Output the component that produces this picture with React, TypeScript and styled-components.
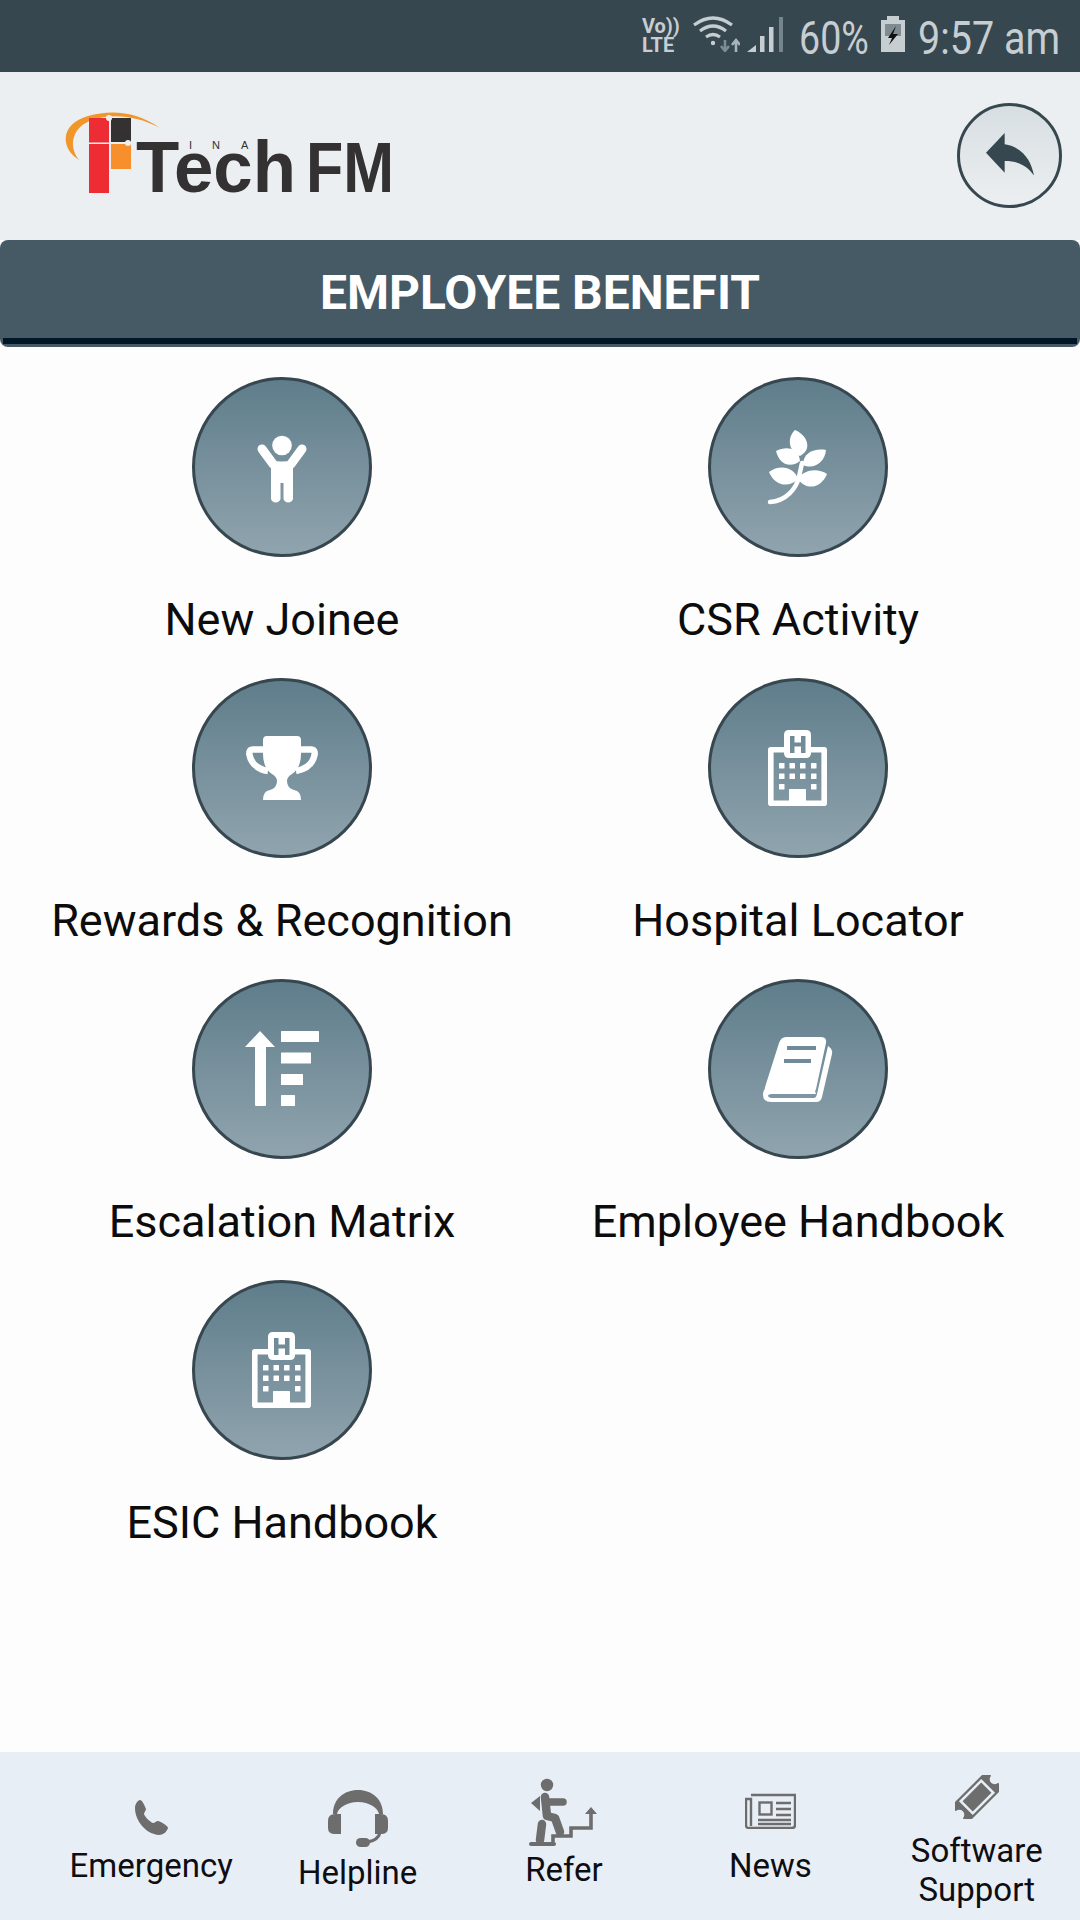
import React from "react";
import styled, { createGlobalStyle } from "styled-components";

const Global = createGlobalStyle`
  html, body { margin: 0; padding: 0; background: #fdfdfd; }
  * { box-sizing: border-box; }
`;

const Screen = styled.div`
  width: 1080px;
  height: 1920px;
  display: flex;
  flex-direction: column;
  background: #fdfdfd;
  font-family: Roboto, "Liberation Sans", sans-serif;
  overflow: hidden;
`;

const StatusBar = styled.div`
  height: 72px;
  flex: none;
  background: #37474f;
  display: flex;
  align-items: flex-start;
  justify-content: flex-end;
  padding: 16px 22px 0 0;
  color: #c7ced2;
`;

const StatusSlot = styled.div<{ $w: number; $gap: number }>`
  width: ${(p) => p.$w}px;
  margin-left: ${(p) => p.$gap}px;
  flex: none;
  height: 40px;
`;

const StatusText = styled.span<{ $scale: number }>`
  display: inline-block;
  margin-top: 2px;
  font-size: 47px;
  line-height: 40px;
  white-space: nowrap;
  transform-origin: left center;
  transform: scaleX(${(p) => p.$scale});
`;

const Network = styled.div`
  font-size: 21px;
  line-height: 19px;
  font-weight: 700;
  white-space: nowrap;
  transform-origin: left top;
  transform: scaleX(0.95);
  padding-top: 1px;
`;

const Header = styled.header`
  height: 168px;
  flex: none;
  background: #eceff1;
  display: flex;
  align-items: center;
  justify-content: space-between;
  padding: 0 18px 0 60px;
`;

const BackButton = styled.button`
  width: 105px;
  height: 105px;
  padding: 0;
  border-radius: 50%;
  border: 3px solid #37474f;
  background: linear-gradient(180deg, #d7dee2, #eceff1);
  display: flex;
  align-items: center;
  justify-content: center;
  margin-bottom: 2px;
`;

const TitleBar = styled.div`
  flex: none;
  height: 107px;
  padding: 0 3px 3px;
  background: #465a65;
  border-radius: 8px;
`;

const Title = styled.h1`
  margin: 0;
  height: 104px;
  padding-top: 6px;
  border-bottom: 6px solid #021629;
  display: flex;
  align-items: center;
  justify-content: center;
  color: #fff;
  font-size: 48px;
  font-weight: 700;
`;

const Grid = styled.main`
  flex: 1;
  display: grid;
  grid-template-columns: 516px 516px;
  grid-auto-rows: 301px;
  padding: 30px 24px 0;
`;

const Tile = styled.div`
  display: flex;
  flex-direction: column;
  align-items: center;
`;

const Disc = styled.div`
  width: 180px;
  height: 180px;
  border-radius: 50%;
  border: 3px solid #37474f;
  background: linear-gradient(180deg, #5f7d8b, #90a4ae);
  display: flex;
  align-items: center;
  justify-content: center;
`;

const TileLabel = styled.div`
  margin-top: 38px;
  font-size: 45px;
  line-height: 50px;
  color: #0c0c0c;
  white-space: nowrap;
`;

const BottomNav = styled.nav`
  flex: none;
  height: 168px;
  background: #e8eef6;
  padding-left: 48px;
  display: grid;
  grid-template-columns: repeat(5, 206.4px);
`;

const NavItem = styled.div<{ $top: number; $gap: number }>`
  display: flex;
  flex-direction: column;
  align-items: center;
  padding-top: ${(p) => p.$top}px;
  gap: ${(p) => p.$gap}px;
`;

const NavLabel = styled.div`
  font-size: 33px;
  line-height: 39px;
  color: #0e0e12;
  text-align: center;
  white-space: nowrap;
`;

const Icon120 = ({ children }: { children: React.ReactNode }) => (
  <svg width="120" height="120" viewBox="0 0 120 120" fill="#fff">{children}</svg>
);

const PersonIcon = () => (
  <Icon120>
    <circle cx="60" cy="38.5" r="9.8" />
    <path d="M40 42 L51 57 M80 42 L69 57" stroke="#fff" strokeWidth="9" strokeLinecap="round" fill="none" />
    <path d="M49 53 Q60 56 71 53 V92 a5 5 0 0 1 -9.5 0 V76 h-3 V92 a5 5 0 0 1 -9.5 0 Z" />
  </Icon120>
);

const LeafIcon = () => (
  <Icon120>
    <path d="M32 95 C48 94 58 82 61 70 L64 56" stroke="#fff" strokeWidth="4.5" strokeLinecap="round" fill="none" />
    <path d="M62 49 C50 45 49 30 57 23 C69 28 75 42 62 49Z" />
    <path d="M62 54 C52 62 41 57 38 44 C50 38 61 42 62 54Z" />
    <path d="M65 58 C65 45 77 41 88 43 C87 55 76 63 65 58Z" />
    <path d="M60 72 C50 82 36 78 31 65 C42 57 56 60 60 72Z" />
    <path d="M60 72 C66 62 80 61 89 67 C84 80 69 85 60 72Z" />
  </Icon120>
);

const TrophyIcon = () => (
  <Icon120>
    <path d="M42 41.5 H31 Q26.5 41.5 27.5 47 Q30 60 46 63 M78 41.5 H89 Q93.5 41.5 92.5 47 Q90 60 74 63" stroke="#fff" strokeWidth="6.5" fill="none" />
    <path d="M45 28 H75 Q79 28 79 32 V46 Q79 60 70 66 Q65 69 65 73 Q65 80 72 82 Q79 83 79 92 H41 Q41 83 48 82 Q55 80 55 73 Q55 69 50 66 Q41 60 41 46 V32 Q41 28 45 28 Z" />
  </Icon120>
);

const HospitalIcon = () => (
  <Icon120>
    <path d="M46 41.8 H32.8 V95.2 H86.2 V41.8 H73" fill="none" stroke="#fff" strokeWidth="5.6" strokeLinejoin="round" />
    <path
      fillRule="evenodd"
      d="M51 22 H68 Q73 22 73 27 V45 Q73 50 68 50 H51 Q46 50 46 45 V27 Q46 22 51 22 Z M52 28 V45 H56.5 V38.5 H63 V45 H67.5 V28 H63 V34.5 H56.5 V28 Z"
    />
    {[55, 65.5].map((y) =>
      [41, 51.5, 62, 73].map((x) => <rect key={`${x}-${y}`} x={x} y={y} width="5.5" height="5.5" rx="0.6" />)
    )}
    <rect x="41" y="76" width="5.5" height="5.5" rx="0.6" />
    <rect x="73" y="76" width="5.5" height="5.5" rx="0.6" />
    <rect x="51" y="81" width="17" height="15" rx="0.5" />
  </Icon120>
);

const EscalationIcon = () => (
  <Icon120>
    <path d="M38 22 L53 38 H44 V96 Q44 97 43 97 H34 Q33 97 33 96 V38 H23 Z" />
    <rect x="59" y="22" width="38" height="11" rx="0.6" />
    <rect x="59" y="43.5" width="30" height="11" rx="0.6" />
    <rect x="59" y="65" width="22" height="11" rx="0.6" />
    <rect x="59" y="86" width="14" height="11" rx="0.6" />
  </Icon120>
);

const BookIcon = () => (
  <Icon120>
    <path d="M48 28 H83 Q89 28 88 34 L78 80 Q77 84 73 84 H36 Q30 84 27 87 Q26 80 28 75 L41 34 Q43 28 48 28 Z" />
    <path d="M30 79 H76 L78 85 H34 Q30 85 30 87 Q31 89 35 89 H76 Q78 89 79 85 L90 37 Q95 40 94 45 L84 88 Q83 93 78 93 H33 Q25 93 25 86 Q25 79 30 79 Z" />
    <path d="M49 39 H78 M46 52 H73" stroke="#6f8a98" strokeWidth="4.2" fill="none" />
  </Icon120>
);

const NAV = "#6d6d6d";

const PhoneIcon = () => (
  <svg width="36" height="36" viewBox="0 0 36 36" fill={NAV}>
    <path d="M2 9 C2 5 5 1 7 1 C9 1 11 5 13 10 C13 12 11 13 11 15 C12 18 17 23 20 24 C22 24 23 22 25 22 C29 23 35 27 35 29 C34 32 31 36 26 36 C13 35 2 22 2 9Z" />
  </svg>
);

const HeadsetIcon = () => (
  <svg width="60" height="57" viewBox="0 0 60 57" fill={NAV}>
    <path d="M5 24 C5 9 16 0 30 0 C44 0 55 9 55 24 H51 C50 18 41 12 30 12 C19 12 10 18 9 24 Z" />
    <path d="M13 24 H7 Q0 24 0 31 V38 Q0 44 7 44 H13 Z" />
    <path d="M47 24 H53 Q60 24 60 31 V38 Q60 44 53 44 H47 Z" />
    <path d="M52 43 Q50 50 40 52" stroke={NAV} strokeWidth="3" fill="none" />
    <rect x="28" y="48" width="14" height="9" rx="4.5" />
  </svg>
);

const ReferIcon = () => (
  <svg width="110" height="74" viewBox="0 6 110 74" fill={NAV}>
    <circle cx="38" cy="15" r="6.2" />
    <path d="M22 33 L31 26 V41 Z" />
    <path d="M36 27 L38 46 L46 48 L51 62" stroke={NAV} strokeWidth="8.5" strokeLinecap="round" strokeLinejoin="round" fill="none" />
    <path d="M38 32 H54" stroke={NAV} strokeWidth="7.5" strokeLinecap="round" fill="none" />
    <path d="M33 54 L31 70" stroke={NAV} strokeWidth="8.5" strokeLinecap="round" fill="none" />
    <path d="M22 74 H45" stroke={NAV} strokeWidth="4" strokeLinecap="round" fill="none" />
    <path d="M44 72 V66 H62 V58 H82 V42" stroke={NAV} strokeWidth="3.6" fill="none" />
    <path d="M76 44 L82 37 L88 44 Z" />
  </svg>
);

const NewsIcon = () => (
  <svg width="51" height="36" viewBox="0 0 51 36" fill="none" stroke={NAV}>
    <path d="M6 2 H50 V32 Q50 35 47 35 H4 Q1 35 1 32 V6 H6 V33" strokeWidth="2.4" />
    <rect x="14.5" y="9.5" width="12" height="12" strokeWidth="2.4" />
    <path d="M31 10 H46 M31 16 H46 M31 22 H46 M13 27 H46 M13 31 H46" strokeWidth="2.4" />
  </svg>
);

const TicketIcon = () => (
  <svg width="44" height="44" viewBox="-22 -22 44 44" fill={NAV}>
    <g transform="rotate(-45)">
      <path d="M-24 -12 H24 Q25 -12 25 -11 V-5 A5 5 0 0 0 25 5 V11 Q25 12 24 12 H-24 Q-25 12 -25 11 V5 A5 5 0 0 0 -25 -5 V-11 Q-25 -12 -24 -12 Z" />
      <rect x="-14.5" y="-8.5" width="29" height="17" fill="none" stroke="#e8eef6" strokeWidth="2.6" />
    </g>
  </svg>
);

const WifiIcon = () => (
  <svg width="47" height="36" viewBox="0 0 47 36" fill="none" stroke="#c7ced2" strokeWidth="3.2" style={{ display: "block" }}>
    <path d="M1 9 Q20 -5 39 9" />
    <path d="M7 15 Q20 5 33 15" />
    <path d="M13 21 Q20 16 27 21" />
    <circle cx="20" cy="27" r="2.2" fill="#c7ced2" stroke="none" />
    <path d="M32 24 V35 M28 30 L32 35 L36 30" stroke="#7e8d95" strokeWidth="2.6" />
    <path d="M43 36 V25 M39 29 L43 24 L47 29" stroke="#a9b4ba" strokeWidth="2.6" />
  </svg>
);

const SignalIcon = () => (
  <svg width="36" height="36" viewBox="0 0 36 36" style={{ display: "block" }}>
    <path d="M0 36 L9 29 V36 Z" fill="#c7ced2" />
    <rect x="13" y="20" width="4.5" height="16" fill="#c7ced2" />
    <rect x="22" y="11" width="4.5" height="25" fill="#c7ced2" />
    <rect x="32" y="1" width="4" height="35" fill="#75858d" />
  </svg>
);

const BatteryIcon = () => (
  <svg width="24" height="36" viewBox="0 0 24 36" style={{ display: "block" }}>
    <path d="M6 0 H18 V4 H24 V36 H0 V4 H6 Z" fill="#c7ced2" />
    <rect x="4" y="8" width="16" height="12" fill="#7e8b92" />
    <path d="M15 10 L7 22 H11 L8 29 L17 18 H12 Z" fill="#111" />
  </svg>
);

const Logo = () => (
  <svg width="370" height="168" viewBox="60 72 370 168" fontFamily="'Liberation Sans', sans-serif">
    <path d="M79 160 C60 148 60 124 88 116 C112 109 138 112 160 128 C138 116 112 113 92 120 C72 127 68 146 79 160 Z" fill="#f0962a" />
    <rect x="89" y="118" width="20" height="24.5" fill="#ee2c33" />
    <rect x="89" y="144" width="20" height="49" fill="#ee2c33" />
    <rect x="111" y="118" width="20" height="24" fill="#333132" />
    <rect x="111" y="144" width="20" height="25" fill="#f68f2c" />
    <circle cx="109" cy="118" r="3" fill="#eceff1" />
    <circle cx="128" cy="143" r="3" fill="#eceff1" />
    <text x="136" y="192" fontSize="72" fontWeight="700" fill="#333132" textLength="160" lengthAdjust="spacingAndGlyphs">Tech</text>
    <text x="306" y="192" fontSize="70" fontWeight="700" fill="#333132" textLength="88" lengthAdjust="spacingAndGlyphs">FM</text>
    <text x="189" y="149" fontSize="11" fill="#333132">I</text>
    <text x="212" y="149" fontSize="11" fill="#333132">N</text>
    <text x="241" y="149" fontSize="11" fill="#333132">A</text>
  </svg>
);

const tiles: { label: string; icon: React.ReactNode }[] = [
  { label: "New Joinee", icon: <PersonIcon /> },
  { label: "CSR Activity", icon: <LeafIcon /> },
  { label: "Rewards & Recognition", icon: <TrophyIcon /> },
  { label: "Hospital Locator", icon: <HospitalIcon /> },
  { label: "Escalation Matrix", icon: <EscalationIcon /> },
  { label: "Employee Handbook", icon: <BookIcon /> },
  { label: "ESIC Handbook", icon: <HospitalIcon /> },
];

const navItems: { label: React.ReactNode; icon: React.ReactNode; top: number; gap: number }[] = [
  { label: "Emergency", icon: <PhoneIcon />, top: 47, gap: 11 },
  { label: "Helpline", icon: <HeadsetIcon />, top: 38, gap: 6 },
  { label: "Refer", icon: <ReferIcon />, top: 24, gap: 0 },
  { label: "News", icon: <NewsIcon />, top: 41, gap: 17 },
  { label: <>Software<br />Support</>, icon: <TicketIcon />, top: 23, gap: 12 },
];

export default function App() {
  return (
    <Screen>
      <Global />
      <StatusBar>
        <StatusSlot $w={35} $gap={0}>
          <Network>Vo))<br />LTE</Network>
        </StatusSlot>
        <StatusSlot $w={47} $gap={16}><WifiIcon /></StatusSlot>
        <StatusSlot $w={36} $gap={7}><SignalIcon /></StatusSlot>
        <StatusSlot $w={69} $gap={16}><StatusText $scale={0.8}>60%</StatusText></StatusSlot>
        <StatusSlot $w={24} $gap={13}><BatteryIcon /></StatusSlot>
        <StatusSlot $w={140} $gap={13}><StatusText $scale={0.84}>9:57 am</StatusText></StatusSlot>
      </StatusBar>
      <Header>
        <Logo />
        <BackButton aria-label="Back">
          <svg width="48" height="44" viewBox="3 5 18 15.5" fill="#37474f" preserveAspectRatio="none">
            <path d="M10 9V5l-7 7 7 7v-4.1c5 0 8.5 1.6 11 5.1-1-5-4-10-11-11z" />
          </svg>
        </BackButton>
      </Header>
      <TitleBar>
        <Title>EMPLOYEE BENEFIT</Title>
      </TitleBar>
      <Grid>
        {tiles.map((t) => (
          <Tile key={t.label}>
            <Disc>{t.icon}</Disc>
            <TileLabel>{t.label}</TileLabel>
          </Tile>
        ))}
      </Grid>
      <BottomNav>
        {navItems.map((n, i) => (
          <NavItem key={i} $top={n.top} $gap={n.gap}>
            {n.icon}
            <NavLabel>{n.label}</NavLabel>
          </NavItem>
        ))}
      </BottomNav>
    </Screen>
  );
}
